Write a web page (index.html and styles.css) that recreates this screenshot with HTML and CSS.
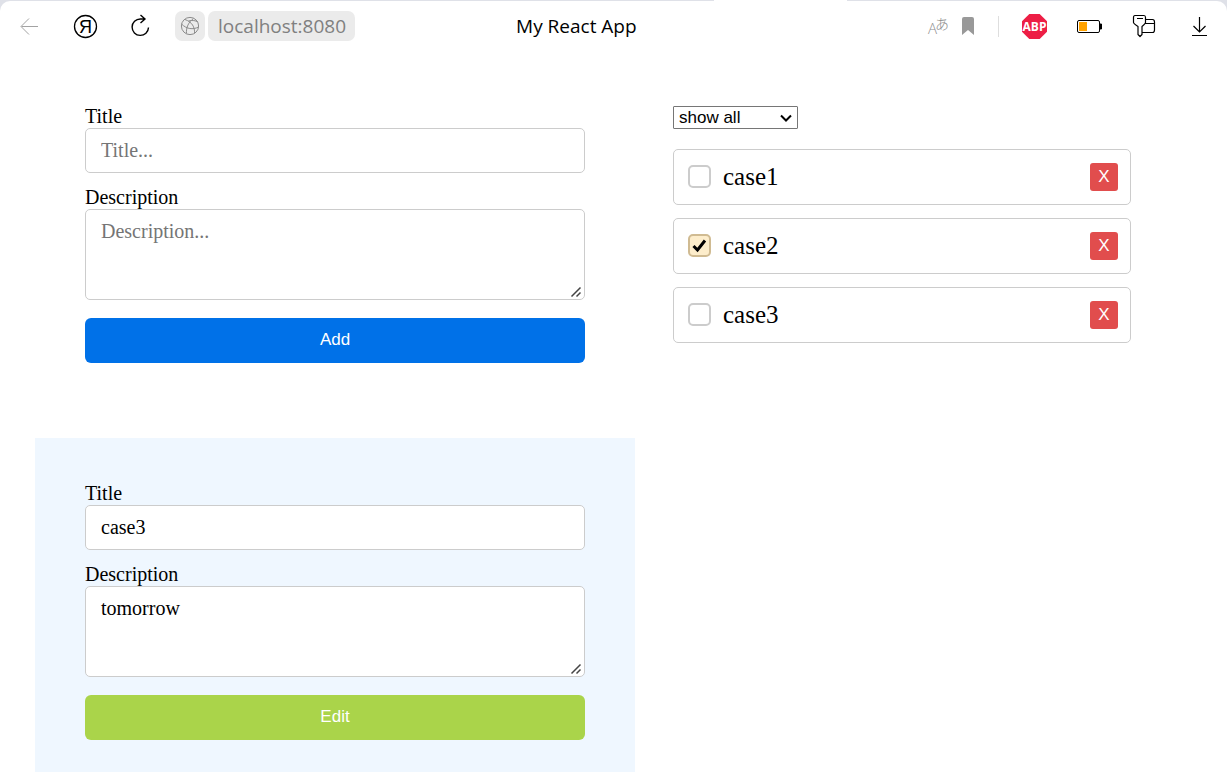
FILE: index.html
```html
<!DOCTYPE html>
<html lang="en">
<head>
  <meta charset="utf-8">
  <title>My React App</title>
  <link rel="stylesheet" href="styles.css">
</head>
<body>
  <div class="window">
    <span class="active-tab"></span>
    <header class="toolbar">
      <nav class="nav-group" aria-label="Navigation">
        <button class="tool" type="button" aria-label="Back" disabled>
          <svg class="icon" viewBox="0 0 30 30"><path d="M23 15.5H6.5M14 7.5l-8 8 8 8" stroke="#a3a3a3"/></svg>
        </button>
        <button class="tool" type="button" aria-label="Home">
          <svg class="icon" viewBox="0 0 30 30"><circle cx="15.5" cy="15.5" r="11" stroke="#000" stroke-width="1.3"/><text class="ya" x="15.5" y="22" text-anchor="middle">Я</text></svg>
        </button>
        <button class="tool" type="button" aria-label="Reload">
          <svg class="icon" viewBox="0 0 30 30"><path d="M23.5 16.500a8.200 8.200 0 1 1-8.200-8.500h4.500M15.500 4l4.500 4-4.500 4" stroke="#000" stroke-width="1.4"/></svg>
        </button>
      </nav>
      <div class="address">
        <button class="site" type="button" aria-label="Site information">
          <svg class="icon" viewBox="0 0 30 30" stroke="#8c8c8c"><circle cx="15" cy="15" r="8.600"/><path d="M10 8.500c7 2.500 10 7.500 9.500 14M18.500 7.500c-5 3.500-7.500 9-7 15M6.500 13c5 5 11.500 6 17 3M13.500 10c4-1 7-.5 9.500 1"/></svg>
        </button>
        <a class="url" href="#">localhost:8080</a>
      </div>
      <span class="page-title">My React App</span>
      <div class="page-tools">
        <button class="tool small" type="button" aria-label="Translate">
          <svg class="icon" viewBox="0 0 24 30"><text class="tr-a" x="2" y="23">A</text><text class="tr-b" x="9" y="18">あ</text></svg>
        </button>
        <button class="tool small" type="button" aria-label="Bookmark">
          <svg class="icon" viewBox="0 0 24 30"><path d="M6 8a2 2 0 0 1 2-2h8a2 2 0 0 1 2 2v16l-6-5-6 5z" fill="#999"/></svg>
        </button>
      </div>
      <div class="extensions">
        <button class="tool" type="button" aria-label="Ad blocker">
          <svg class="icon" viewBox="0 0 30 30"><path d="M10.300 3h10.400L28 10.300v10.400L20.700 28H10.300L3 20.700V10.300z" fill="#ed1e45"/><text class="abp" x="15.500" y="20" text-anchor="middle">ABP</text></svg>
        </button>
        <button class="tool" type="button" aria-label="Battery">
          <svg class="icon" viewBox="0 0 30 30"><rect x="3.500" y="9.500" width="22" height="12" rx="1.500" stroke="#000"/><rect x="5" y="11" width="8" height="9" fill="#ffa200"/><path d="M26 13h1.500v5H26z" fill="#000" stroke="#000"/></svg>
        </button>
        <button class="tool" type="button" aria-label="Passwords">
          <svg class="icon" viewBox="0 0 30 30" stroke="#000" stroke-width="1.200" stroke-linejoin="round"><path d="M16 8.500h7.500q2 0 2 2.500v8q0 2.500-2 2.500H13M16 12.500h9.500"/><path d="M6 4.500h9q1.500 0 1.500 2v5q0 1-3.500 4v8l-2 2-2-2v-8Q4.500 12.500 4.500 11.500v-5q0-2 1.500-2zM8 7.500h6"/></svg>
        </button>
        <button class="tool" type="button" aria-label="Downloads">
          <svg class="icon" viewBox="0 0 30 30"><path d="M15.500 6v15M9.500 15l6 6 6-6M8 24.500h15" stroke="#000" stroke-width="1.200"/></svg>
        </button>
      </div>
    </header>

    <main class="app">
      <div class="forms">
        <form class="panel">
          <label class="label" for="new-title">Title</label>
          <input class="field" id="new-title" type="text" placeholder="Title...">
          <label class="label" for="new-description">Description</label>
          <textarea class="field area" id="new-description" placeholder="Description..."></textarea>
          <button class="submit add" type="button">Add</button>
        </form>
        <form class="panel editing">
          <label class="label" for="edit-title">Title</label>
          <input class="field" id="edit-title" type="text" value="case3">
          <label class="label" for="edit-description">Description</label>
          <textarea class="field area" id="edit-description">tomorrow</textarea>
          <button class="submit edit" type="button">Edit</button>
        </form>
      </div>
      <section class="cases">
        <select class="filter" aria-label="Filter">
          <option>show all</option>
          <option>completed</option>
          <option>uncompleted</option>
        </select>
        <ul class="list">
          <li class="case">
            <input class="check" id="case1" type="checkbox">
            <label class="name" for="case1">case1</label>
            <button class="remove" type="button" aria-label="Remove case1">X</button>
          </li>
          <li class="case">
            <input class="check" id="case2" type="checkbox" checked>
            <label class="name" for="case2">case2</label>
            <button class="remove" type="button" aria-label="Remove case2">X</button>
          </li>
          <li class="case">
            <input class="check" id="case3" type="checkbox">
            <label class="name" for="case3">case3</label>
            <button class="remove" type="button" aria-label="Remove case3">X</button>
          </li>
        </ul>
      </section>
    </main>
  </div>
</body>
</html>
```
FILE: styles.css
```css
* { box-sizing: border-box; }

body {
  margin: 0;
  height: 100vh;
  padding-top: 1px;
  background: #dfe1e8;
  color: #000;
  font: 20px/23px "Liberation Serif", "Times New Roman", serif;
}

button { border: 0; padding: 0; cursor: pointer; }

.window {
  position: relative;
  display: flex;
  flex-direction: column;
  height: 100%;
  background: #fff;
  border-radius: 10px 10px 0 0;
}

.active-tab {
  position: absolute;
  top: -1px;
  left: 714px;
  width: 133px;
  height: 2px;
  background: #fff;
}

.toolbar {
  display: flex;
  align-items: center;
  flex: none;
  height: 50px;
  padding: 0 13px 0 15px;
  font-family: "Open Sans", "Noto Sans", sans-serif;
}

.nav-group, .extensions { display: flex; gap: 25px; }

.tool {
  width: 30px;
  height: 30px;
  background: none;
}

.small { width: 24px; }

.icon {
  display: block;
  width: 100%;
  height: 30px;
  fill: none;
}

.ya { font: 18px "Liberation Sans", sans-serif; fill: #000; }
.tr-a { font: 300 15px "Open Sans", sans-serif; fill: #8c8c8c; }
.tr-b { font: 300 14px "Noto Sans CJK JP", sans-serif; fill: #8c8c8c; }
.abp { font: bold 12px "Open Sans", sans-serif; fill: #fff; }

.address { display: flex; gap: 3px; margin-left: 20px; }

.site {
  width: 30px;
  height: 30px;
  border-radius: 7px;
  background: #ebebeb;
}

.url {
  padding: 1px 9px 0 10px;
  border-radius: 7px;
  background: #ebebeb;
  color: #808080;
  font-size: 19px;
  line-height: 29px;
  text-decoration: none;
}

.page-title { padding-top: 1px; margin-left: 161px; font-size: 19px; }

.page-tools {
  display: flex;
  gap: 6px;
  margin-left: auto;
}

.extensions {
  position: relative;
  margin-left: 18px;
  padding-left: 21px;
}

.extensions::before {
  content: "";
  position: absolute;
  left: 0;
  top: 5px;
  width: 1px;
  height: 21px;
  background: #dedede;
}

.app {
  display: grid;
  grid-template-columns: 600fr 458fr;
  align-items: start;
  gap: 38px;
  flex: 1;
  min-height: 0;
  padding: 10px 96px 0 35px;
  overflow: auto;
  scrollbar-width: none;
}

.forms { display: grid; gap: 25px; }

.panel {
  display: flex;
  flex-direction: column;
  padding: 44px 50px 50px;
}

.editing { background: #eff7ff; }

.field {
  width: 100%;
  height: 45px;
  margin: 0 0 13px;
  padding: 10px 15px;
  border: 1px solid #ccc;
  border-radius: 5px;
  background: #fff;
  color: #000;
  font: inherit;
}

.field::placeholder { color: #757575; }

.area {
  height: 91px;
  margin-bottom: 18px;
  resize: vertical;
}

.area::-webkit-resizer {
  background: url("data:image/svg+xml,%3Csvg xmlns='http://www.w3.org/2000/svg' viewBox='0 0 15 15'%3E%3Cpath d='M2.500 12.500l9-9M7.500 12.500l4-4' stroke='%23444' stroke-width='1.500'/%3E%3C/svg%3E") right bottom / 15px 15px no-repeat;
}

.submit {
  height: 45px;
  padding-bottom: 2px;
  border-radius: 6px;
  color: #fff;
  font: 17px/20px "Liberation Sans", Arial, sans-serif;
}

.add { background: #0071e8; }
.edit { background: #aad44a; }

.cases { padding-top: 45px; }

.filter {
  display: block;
  appearance: none;
  width: 125px;
  height: 23px;
  padding: 0 24px 0 5px;
  border: 1px solid #767676;
  border-radius: 1px;
  background: #fff url("data:image/svg+xml,%3Csvg xmlns='http://www.w3.org/2000/svg' viewBox='0 0 12 8'%3E%3Cpath d='M1 1.500l5 5 5-5' fill='none' stroke='%23000' stroke-width='2'/%3E%3C/svg%3E") right 5px center / 12px 8px no-repeat;
  color: #000;
  font: 17px/20px "Liberation Sans", Arial, sans-serif;
}

.list {
  display: grid;
  gap: 13px;
  margin: 20px 0 0;
  padding: 0;
  list-style: none;
}

.case {
  display: flex;
  align-items: center;
  height: 56px;
  padding: 0 12px 0 14px;
  border: 1px solid #ccc;
  border-radius: 5px;
}

.check {
  appearance: none;
  width: 23px;
  height: 23px;
  margin: 0 12px 2px 0;
  border: 2px solid #ccc;
  border-radius: 5px;
  background: #fff;
}

.check:checked {
  border-color: #d0bb92;
  background: #fdedcb url("data:image/svg+xml,%3Csvg xmlns='http://www.w3.org/2000/svg' viewBox='0 0 19 19'%3E%3Cpath d='M3.500 10l4 4 7.500-9.500' fill='none' stroke='%23000' stroke-width='3'/%3E%3C/svg%3E") center / 19px 19px no-repeat;
}

.name { flex: 1; padding-bottom: 2px; font-size: 25px; line-height: 29px; }

.remove {
  width: 28px;
  height: 28px;
  border-radius: 3px;
  background: #e14d4d;
  color: #fff;
  font: 17px/20px "Liberation Sans", Arial, sans-serif;
}
```
